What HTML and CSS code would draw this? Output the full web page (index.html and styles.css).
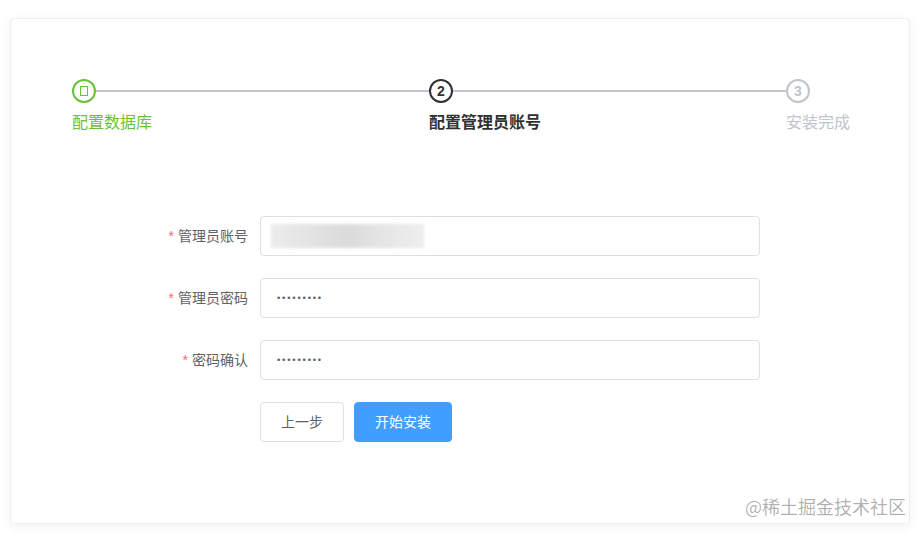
FILE: index.html
```html
<!DOCTYPE html>
<html lang="zh">
<head>
<meta charset="utf-8">
<title>安装</title>
<link rel="stylesheet" href="styles.css">
</head>
<body>
<div class="card">
  <div class="steps">
    <div class="step step-success">
      <div class="step-head">
        <div class="step-line"></div>
        <div class="step-icon"><span class="tofu"></span></div>
      </div>
      <div class="step-title">配置数据库</div>
    </div>
    <div class="step step-process">
      <div class="step-head">
        <div class="step-line"></div>
        <div class="step-icon">2</div>
      </div>
      <div class="step-title">配置管理员账号</div>
    </div>
    <div class="step step-wait step-last">
      <div class="step-head">
        <div class="step-icon">3</div>
      </div>
      <div class="step-title">安装完成</div>
    </div>
  </div>

  <form class="form">
    <div class="form-item">
      <label class="form-label"><span class="req">*</span>管理员账号</label>
      <div class="input"><span class="blurred"></span></div>
    </div>
    <div class="form-item">
      <label class="form-label"><span class="req">*</span>管理员密码</label>
      <div class="input"><span class="dots">•••••••••</span></div>
    </div>
    <div class="form-item">
      <label class="form-label"><span class="req">*</span>密码确认</label>
      <div class="input"><span class="dots">•••••••••</span></div>
    </div>
    <div class="form-item">
      <div class="form-label"></div>
      <div class="buttons">
        <button type="button" class="btn">上一步</button>
        <button type="button" class="btn btn-primary">开始安装</button>
      </div>
    </div>
  </form>
</div>
<div class="watermark">@稀土掘金技术社区</div>
</body>
</html>
```

FILE: styles.css
```css
html, body {
  margin: 0;
  padding: 0;
  background: #fff;
}
body {
  font-family: "Liberation Sans", "Noto Sans CJK SC", sans-serif;
  width: 923px;
  height: 534px;
  position: relative;
  overflow: hidden;
}
.card {
  margin: 18px 0 0 10px;
  width: 900px;
  height: 506px;
  box-sizing: border-box;
  border: 1px solid #ebeef5;
  border-radius: 4px;
  box-shadow: 0 2px 12px 0 rgba(0, 0, 0, 0.06);
  padding: 60px 61px;
  background: #fff;
}
.steps {
  display: flex;
}
.step {
  width: 357px;
  flex-shrink: 0;
}
.step-last {
  width: auto;
}
.step-head {
  position: relative;
  height: 24px;
}
.step-line {
  position: absolute;
  left: 0;
  right: 0;
  top: 11px;
  height: 2px;
  background: #c0c4cc;
}
.step-icon {
  position: relative;
  width: 24px;
  height: 24px;
  box-sizing: border-box;
  border: 2px solid #c0c4cc;
  border-radius: 50%;
  background: #fff;
  color: #c0c4cc;
  display: flex;
  align-items: center;
  justify-content: center;
  font-size: 14px;
  font-weight: 700;
  line-height: 1;
}
.step-title {
  font-family: "Noto Sans CJK SC", sans-serif;
  font-size: 16px;
  line-height: 36px;
  padding-bottom: 2px;
  color: #c0c4cc;
  white-space: nowrap;
}
.step-success .step-icon {
  border-color: #67c23a;
  color: #67c23a;
}
.step-success .step-title {
  color: #67c23a;
}
.tofu {
  display: block;
  width: 6px;
  height: 8px;
  border: 1.5px solid #67c23a;
}
.step-process .step-icon {
  border-color: #303133;
  color: #303133;
}
.step-process .step-title {
  color: #303133;
  font-weight: 700;
}
.form {
  width: 600px;
  margin: 75px auto 0;
}
.form-item {
  display: flex;
  align-items: center;
  margin-bottom: 22px;
  height: 40px;
}
.form-label {
  width: 100px;
  flex-shrink: 0;
  box-sizing: border-box;
  padding-right: 12px;
  padding-bottom: 2px;
  text-align: right;
  font-family: "Noto Sans CJK SC", sans-serif;
  font-size: 14px;
  color: #606266;
  line-height: 38px;
}
.req {
  color: #f56c6c;
  margin-right: 4px;
  font-family: "Liberation Sans", sans-serif;
}
.input {
  flex: 1;
  height: 40px;
  box-sizing: border-box;
  border: 1px solid #dcdfe6;
  border-radius: 4px;
  padding: 0 15px;
  display: flex;
  align-items: center;
  overflow: hidden;
}
.blurred {
  display: block;
  width: 153px;
  height: 24px;
  margin-left: -5px;
  background: linear-gradient(90deg, #ececec 0%, #e2e2e2 30%, #dadada 50%, #e4e4e4 70%, #eeeeee 100%);
  filter: blur(1.5px);
}
.dots {
  font-family: "DejaVu Sans", sans-serif;
  font-size: 9px;
  color: #606266;
  letter-spacing: -0.2px;
}
.buttons {
  display: flex;
  gap: 10px;
}
.btn {
  font-family: "Noto Sans CJK SC", sans-serif;
  font-size: 14px;
  line-height: 14px;
  padding: 11px 20px 13px;
  height: 40px;
  box-sizing: border-box;
  border: 1px solid #dcdfe6;
  border-radius: 4px;
  background: #fff;
  color: #606266;
  cursor: pointer;
}
.btn-primary {
  background: #409eff;
  border-color: #409eff;
  color: #fff;
}
.watermark {
  position: absolute;
  right: 17px;
  top: 494px;
  font-family: "Noto Sans CJK SC", sans-serif;
  font-size: 18px;
  line-height: 24px;
  color: rgba(0, 0, 0, 0.32);
  white-space: nowrap;
}
```
